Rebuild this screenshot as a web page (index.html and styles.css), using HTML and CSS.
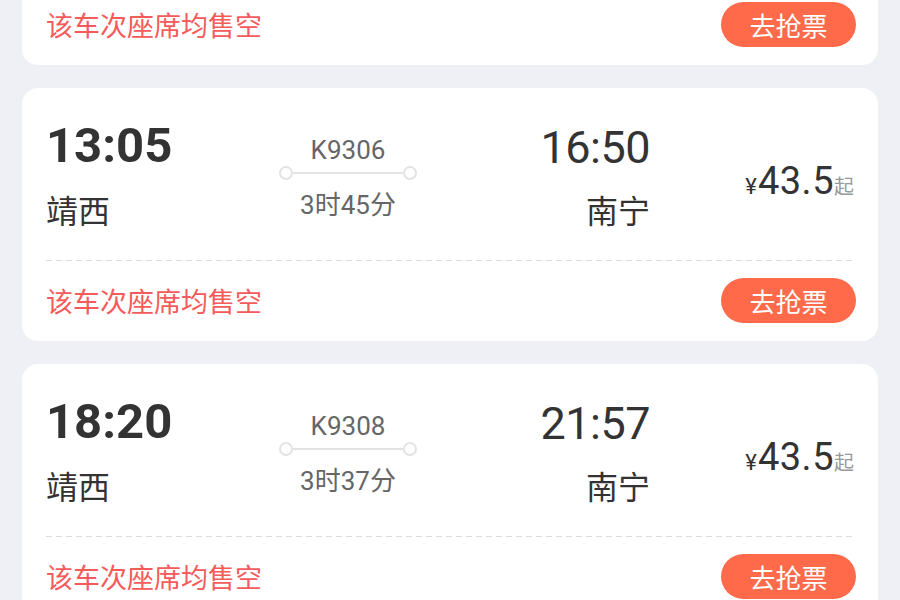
FILE: index.html
```html
<!DOCTYPE html>
<html lang="zh-CN">
  <head>
    <meta charset="UTF-8" />
    <meta name="viewport" content="width=device-width, initial-scale=1.0" />
    <title>车次列表</title>
    <link rel="stylesheet" href="styles.css">
  </head>
  <body>
    <div class="train-list">
      <div class="card">
        <div class="card-foot">
          <span class="sold-out">该车次座席均售空</span>
          <button class="grab-btn">去抢票</button>
        </div>
      </div>

      <div class="card">
        <div class="card-main">
          <div class="dep">
            <div class="time time-dep">13:05</div>
            <div class="station">靖西</div>
          </div>
          <div class="mid">
            <div class="train-no">K9306</div>
            <div class="track"><span class="dot"></span><span class="line"></span><span class="dot"></span></div>
            <div class="duration">3时45分</div>
          </div>
          <div class="arr">
            <div class="time time-arr">16:50</div>
            <div class="station">南宁</div>
          </div>
          <div class="price"><span class="yen">¥</span><span class="amount">43.5</span><span class="from">起</span></div>
        </div>
        <div class="divider"></div>
        <div class="card-foot">
          <span class="sold-out">该车次座席均售空</span>
          <button class="grab-btn">去抢票</button>
        </div>
      </div>

      <div class="card">
        <div class="card-main">
          <div class="dep">
            <div class="time time-dep">18:20</div>
            <div class="station">靖西</div>
          </div>
          <div class="mid">
            <div class="train-no">K9308</div>
            <div class="track"><span class="dot"></span><span class="line"></span><span class="dot"></span></div>
            <div class="duration">3时37分</div>
          </div>
          <div class="arr">
            <div class="time time-arr">21:57</div>
            <div class="station">南宁</div>
          </div>
          <div class="price"><span class="yen">¥</span><span class="amount">43.5</span><span class="from">起</span></div>
        </div>
        <div class="divider"></div>
        <div class="card-foot">
          <span class="sold-out">该车次座席均售空</span>
          <button class="grab-btn">去抢票</button>
        </div>
      </div>
    </div>
  </body>
</html>
```

FILE: styles.css
```css
body {
  margin: 0;
  background-color: #eef0f5;
  font-family: Roboto, "Noto Sans CJK SC", sans-serif;
  color: #333;
  overflow: hidden;
}
.train-list {
  margin-top: -15px;
  padding: 0 22px;
}
.card {
  background-color: #fff;
  border-radius: 16px;
  padding: 0 22px 0 24px;
  margin-bottom: 23px;
}
.card-main {
  display: flex;
  align-items: flex-start;
  height: 172px;
  box-sizing: border-box;
  padding-top: 28px;
}
.dep {
  width: 200px;
}
.mid {
  width: 204px;
  margin-top: 19px;
  text-align: center;
  color: #666;
}
.arr {
  width: 200px;
  text-align: right;
}
.price {
  flex: 1;
  text-align: right;
  margin-top: 43px;
  padding-right: 2px;
  line-height: 44px;
}
.time {
  line-height: 60px;
}
.time-dep {
  font-size: 49px;
  font-weight: bold;
}
.time-arr {
  font-size: 45px;
  letter-spacing: -0.5px;
  margin-top: 2px;
}
.station {
  font-size: 32px;
  line-height: 40px;
  margin-top: 16px;
}
.arr .station {
  margin-top: 14px;
}
.train-no {
  font-size: 26px;
  line-height: 30px;
}
.track {
  display: flex;
  align-items: center;
  width: 138px;
  height: 14px;
  margin: 1px auto 0;
}
.dot {
  width: 10px;
  height: 10px;
  border: 2px solid #e3e3e3;
  border-radius: 50%;
}
.line {
  flex: 1;
  height: 2px;
  background-color: #e3e3e3;
}
.duration {
  font-size: 26px;
  line-height: 30px;
  margin-top: 10px;
}
.yen {
  font-size: 22px;
}
.amount {
  font-size: 38px;
  letter-spacing: 0.5px;
  margin-left: 1px;
}
.from {
  font-size: 20px;
  color: #999;
}
.divider {
  height: 1px;
  background-image: repeating-linear-gradient(to right, #dcdcdc 0 6px, transparent 6px 10px);
}
.card-foot {
  display: flex;
  justify-content: space-between;
  align-items: center;
  padding: 17px 0 18px;
}
.sold-out {
  font-size: 27px;
  color: #f55b5b;
}
.grab-btn {
  width: 135px;
  height: 45px;
  padding: 0;
  border: none;
  border-radius: 23px;
  background-color: #ff6b4a;
  color: #fff;
  font-family: Roboto, "Noto Sans CJK SC", sans-serif;
  font-size: 26px;
}
```
